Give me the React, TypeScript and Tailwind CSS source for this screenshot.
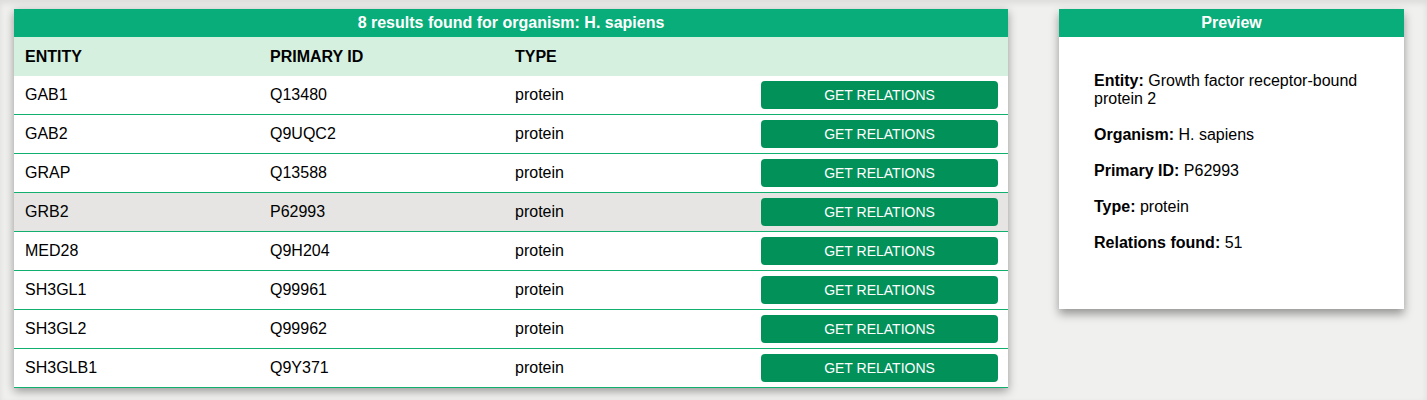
const rows = [
  { entity: "GAB1", id: "Q13480", type: "protein" },
  { entity: "GAB2", id: "Q9UQC2", type: "protein" },
  { entity: "GRAP", id: "Q13588", type: "protein" },
  { entity: "GRB2", id: "P62993", type: "protein", selected: true },
  { entity: "MED28", id: "Q9H204", type: "protein" },
  { entity: "SH3GL1", id: "Q99961", type: "protein" },
  { entity: "SH3GL2", id: "Q99962", type: "protein" },
  { entity: "SH3GLB1", id: "Q9Y371", type: "protein" },
];

const preview = [
  { label: "Entity:", value: "Growth factor receptor-bound protein 2" },
  { label: "Organism:", value: "H. sapiens" },
  { label: "Primary ID:", value: "P62993" },
  { label: "Type:", value: "protein" },
  { label: "Relations found:", value: "51" },
];

export default function App() {
  return (
    <div
      className="min-h-[400px] bg-[#f0f0ee] shadow-[inset_0_3px_6px_rgba(0,0,0,0.09)] text-black"
      style={{ fontFamily: '"Liberation Sans", Arial, sans-serif' }}
    >
      <div className="flex items-start gap-[51px] pt-[9px] pl-[14px]">
        {/* Results table */}
        <div className="w-[994px] bg-white shadow-[0_3px_9px_rgba(0,0,0,0.38)]">
          <div className="h-[28px] bg-[#08ad79] text-white font-bold text-base leading-[28px] text-center">
            8 results found for organism: H. sapiens
          </div>
          <div className="grid grid-cols-[245px_245px_245px_1fr] h-[39px] items-center bg-[#d5f0df] font-bold text-base">
            <div className="pl-[11px]">ENTITY</div>
            <div className="pl-[11px]">PRIMARY ID</div>
            <div className="pl-[11px]">TYPE</div>
            <div />
          </div>
          {rows.map((r) => (
            <div
              key={r.entity}
              className={`grid grid-cols-[245px_245px_245px_1fr] h-[39px] items-center border-b border-[#12b070] text-base ${
                r.selected ? "bg-[#e6e5e3]" : "bg-white"
              }`}
            >
              <div className="pl-[11px]">{r.entity}</div>
              <div className="pl-[11px]">{r.id}</div>
              <div className="pl-[11px]">{r.type}</div>
              <div className="pl-[12px] pr-[10px]">
                <button className="w-full h-[28px] rounded-[4px] bg-[#03915a] text-white text-sm">
                  GET RELATIONS
                </button>
              </div>
            </div>
          ))}
        </div>

        {/* Preview card */}
        <div className="w-[345px] bg-white shadow-[0_5px_9px_rgba(0,0,0,0.38)]">
          <div className="h-[28px] bg-[#08ad79] text-white font-bold text-base leading-[28px] text-center">
            Preview
          </div>
          <div className="px-[35px] pt-[17px] pb-[39px] text-base leading-[18px]">
            {preview.map((p) => (
              <p key={p.label} className="my-[18px]">
                <span className="font-bold">{p.label}</span> {p.value}
              </p>
            ))}
          </div>
        </div>
      </div>
    </div>
  );
}
